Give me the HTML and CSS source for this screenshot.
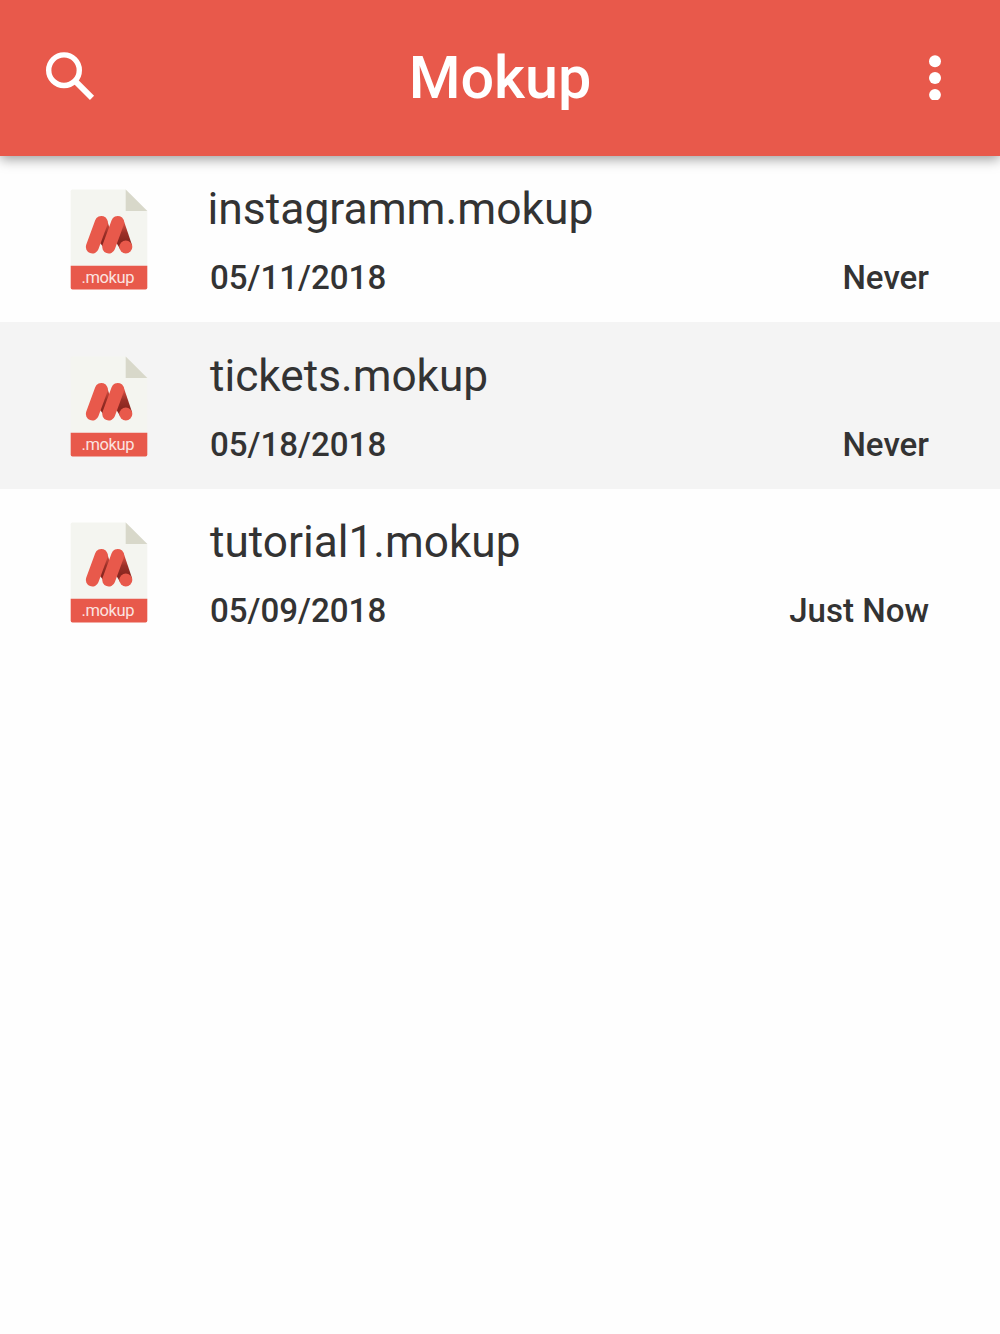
FILE: index.html
```html
<!DOCTYPE html>
<html lang="en">
<head>
  <meta charset="UTF-8">
  <title>Mokup</title>
  <link rel="stylesheet" href="styles.css">
</head>
<body>

<!-- file icon, shared by every row -->
<svg class="defs" width="0" height="0">
  <defs>
    <linearGradient id="fold" gradientUnits="userSpaceOnUse" x1="0" y1="31" x2="0" y2="52">
      <stop offset="0" stop-color="#e8594b"/>
      <stop offset="0.6" stop-color="#9c3028"/>
      <stop offset="1" stop-color="#8a2720"/>
    </linearGradient>
    <symbol id="file" viewBox="0 0 78 102">
      <path d="M2.5 0.5H55.7L77.3 22V78H0.7V2.3Q0.7 0.5 2.5 0.5Z" fill="#f4f5f0"/>
      <path d="M55.7 0.5L77.3 22H55.7Z" fill="#d8d8ca"/>
      <path d="M0.7 76.7H77.3V98.7Q77.3 100.5 75.5 100.5H2.5Q0.7 100.5 0.7 98.7Z" fill="#e8594b"/>
      <path d="M36.8 30.5L40.3 41L34 59L30 54Z" fill="url(#fold)"/>
      <path d="M53.4 30.5L62 56L50 60L46 53Z" fill="url(#fold)"/>
      <path d="M31.3 33.4L22.3 58M47.7 33.4L38.7 58" fill="none" stroke="#e8594b" stroke-width="13" stroke-linecap="round"/>
      <circle cx="55.8" cy="58" r="6.5" fill="#e8594b"/>
      <text class="ext" x="11.5" y="93.5" textLength="53">.mokup</text>
    </symbol>
  </defs>
</svg>

<header class="toolbar">
  <svg class="icon" viewBox="0 0 50 50">
    <circle cx="19" cy="20.2" r="15.3" fill="none" stroke="#fff" stroke-width="5.4"/>
    <path d="M31 31.9L47 47.9" stroke="#fff" stroke-width="5.8"/>
  </svg>
  <h1>Mokup</h1>
  <svg class="icon" viewBox="0 0 50 50">
    <g fill="#fff">
      <circle cx="35" cy="11.2" r="6"/>
      <circle cx="35" cy="28" r="6"/>
      <circle cx="35" cy="44.8" r="5.9"/>
    </g>
  </svg>
</header>

<ul class="files">
  <li class="file">
    <svg class="thumb"><use href="#file"/></svg>
    <div class="info">
      <div class="name first">instagramm.mokup</div>
      <div class="meta"><span>05/11/2018</span><span>Never</span></div>
    </div>
  </li>
  <li class="file">
    <svg class="thumb"><use href="#file"/></svg>
    <div class="info">
      <div class="name">tickets.mokup</div>
      <div class="meta"><span>05/18/2018</span><span>Never</span></div>
    </div>
  </li>
  <li class="file">
    <svg class="thumb"><use href="#file"/></svg>
    <div class="info">
      <div class="name">tutorial1.mokup</div>
      <div class="meta"><span>05/09/2018</span><span>Just Now</span></div>
    </div>
  </li>
</ul>

</body>
</html>
```

FILE: styles.css
```css
* {
  box-sizing: border-box;
}
body {
  margin: 0;
  background: #fefefe;
  color: #333;
  font-family: Roboto, "Liberation Sans", sans-serif;
}
.defs {
  position: absolute;
}
.toolbar {
  position: relative;
  display: flex;
  justify-content: space-between;
  align-items: center;
  height: 155.5px;
  padding: 0 50px 0 45px;
  background: #e8594b;
  box-shadow: 0 3px 12px rgba(0,0,0,0.4);
}
.toolbar h1 {
  margin: 0 0 0 5px;
  color: #fff;
  font-size: 59.3px;
  font-weight: 500;
}
.icon {
  width: 50px;
  height: 50px;
  margin-bottom: 5px;
}
.files {
  margin: 0;
  padding: 0;
  list-style: none;
}
.file {
  display: flex;
  height: 166.75px;
  padding: 33px 71px 0 70px;
}
.file:nth-child(even) {
  padding-top: 33.5px;
  background: #f4f4f4;
}
.thumb {
  width: 78px;
  height: 102px;
}
.ext {
  fill: #fbe3e0;
  font-size: 16.5px;
}
.info {
  flex: 1;
  margin-left: 62px;
}
.name {
  margin-top: -7px;
  font-size: 44.2px;
  line-height: 54px;
}
.name.first {
  margin-left: -2.5px;
  font-size: 44.4px;
}
.meta {
  display: flex;
  justify-content: space-between;
  margin-top: 22px;
  font-size: 33.1px;
  font-weight: 500;
  line-height: 40px;
}
```
